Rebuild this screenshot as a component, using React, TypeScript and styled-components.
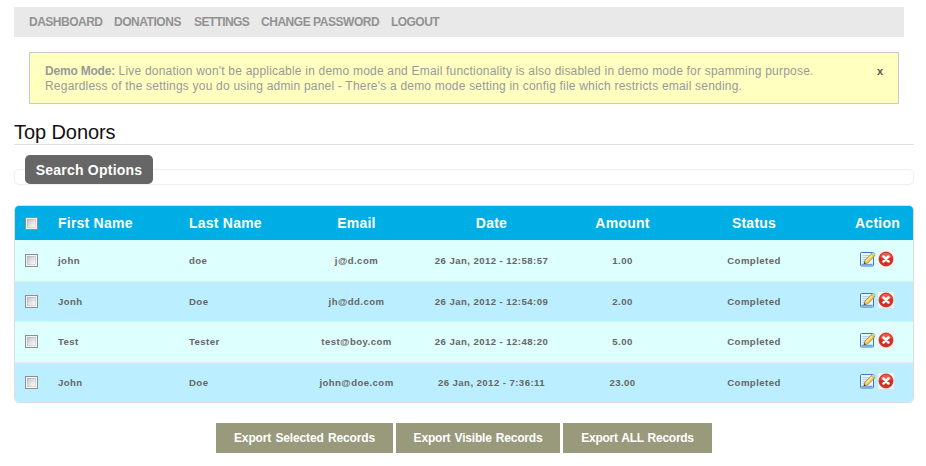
import React from "react";
import styled, { createGlobalStyle } from "styled-components";

const GlobalStyle = createGlobalStyle`
  * { box-sizing: border-box; }
  body {
    margin: 0;
    background: #fff;
    font-family: "Liberation Sans", Arial, sans-serif;
    font-size: 12px;
    color: #999;
  }
`;

const Page = styled.div`
  width: 926px;
  height: 466px;
  padding: 7px 12px 0 14px;
  overflow: hidden;
`;

const NavBar = styled.nav`
  display: flex;
  width: 890px;
  height: 30px;
  padding: 0 15px;
  background: #e9e9e9;
`;

const NavLink = styled.a<{ $width: number; $tracking: number }>`
  width: ${(p) => p.$width}px;
  line-height: 30px;
  font-weight: bold;
  letter-spacing: ${(p) => p.$tracking}px;
  white-space: nowrap;
  color: #929292;
`;

const Notice = styled.section`
  display: flex;
  justify-content: space-between;
  width: 870px;
  height: 52px;
  margin: 15px 0 0 15px;
  padding: 11px 15px 0;
  border: 1px solid #c9c9c9;
  background: #ffffbf;
`;

const NoticeLine = styled.p`
  margin: 0;
  line-height: 15px;
  letter-spacing: 0.205px;
  white-space: nowrap;
`;

const NoticeLabel = styled.b`
  letter-spacing: -0.2px;
`;

const NoticeClose = styled.button`
  height: 14px;
  padding: 0;
  border: 0;
  background: none;
  font: bold 11px/14px "Liberation Sans", Arial, sans-serif;
  color: #555;
`;

const Title = styled.h1`
  width: 900px;
  height: 28px;
  margin: 13px 0 0;
  padding-top: 4px;
  border-bottom: 1px solid #ddd;
  font-size: 20px;
  line-height: 23px;
  font-weight: normal;
  letter-spacing: -0.08px;
  color: #111;
`;

const SearchBox = styled.section`
  display: flex;
  width: 900px;
  height: 16px;
  margin-top: 24px;
  padding-left: 10px;
  border: 1px solid #eee;
  border-radius: 5px;
`;

const SearchLabel = styled.h2`
  width: 128px;
  height: 29px;
  margin: -15px 0 0;
  border-radius: 5px;
  background: #666;
  color: #fff;
  font-size: 14px;
  line-height: 30px;
  letter-spacing: 0.23px;
  text-align: center;
`;

const Table = styled.section`
  width: 900px;
  height: 198px;
  margin-top: 20px;
  border: 1px solid #ddd;
  border-radius: 5px;
  overflow: hidden;
`;

const Row = styled.div<{ $height: number; $line: number; $fill: string; $head?: boolean }>`
  display: grid;
  grid-template-columns: 43px 131px 98px 139px 131px 131px 132px 93px;
  height: ${(p) => p.$height}px;
  background: ${(p) => p.$fill};
  border-bottom: ${(p) => (p.$head ? 0 : "1px solid #e4ecec")};
  color: ${(p) => (p.$head ? "#fff" : "#666")};
  font-size: ${(p) => (p.$head ? 14 : 9.6)}px;
  line-height: ${(p) => p.$line}px;
  letter-spacing: ${(p) => (p.$head ? 0.23 : 0.43)}px;
  font-weight: bold;
  &:last-child { border-bottom: 0; }
`;

const Cell = styled.div<{ $center?: boolean }>`
  text-align: ${(p) => (p.$center ? "center" : "left")};
  white-space: nowrap;
`;

const CheckCell = styled.div<{ $top: number }>`
  padding: ${(p) => p.$top}px 0 0 10px;
`;

const Checkbox = styled.input`
  display: block;
  appearance: none;
  width: 13px;
  height: 13px;
  margin: 0;
  border: 1px solid #8e8f8f;
  background: linear-gradient(135deg, #c4c8d0, #f4f4f4 85%) center / 7px 7px no-repeat,
    linear-gradient(135deg, #b2b7c0, #e2e2e2) center / 9px 9px no-repeat, #f4f4f4;
`;

const ActionCell = styled.div<{ $top: number }>`
  display: flex;
  gap: 2px;
  padding: ${(p) => p.$top}px 0 0 40px;
`;

const ActionHead = styled(Cell)`
  padding-left: 22px;
`;

const Exports = styled.div`
  display: flex;
  gap: 3px;
  margin: 20px 0 0 202px;
`;

const ExportButton = styled.button<{ $width: number; $tracking: number }>`
  width: ${(p) => p.$width}px;
  height: 30px;
  padding: 0;
  border: 0;
  background: #99997b;
  color: #fff;
  font: bold 12px/30px "Liberation Sans", Arial, sans-serif;
  letter-spacing: ${(p) => p.$tracking}px;
  word-spacing: 1px;
  white-space: nowrap;
`;

const EditIcon = () => (
  <svg width="16" height="16" viewBox="0 0 16 16">
    <rect x=".5" y="1.5" width="13" height="13.5" rx="1" fill="#eaf4ff" stroke="#3a78c3" />
    <path d="M2.5 4.5h7M2.5 6.5h6M2.5 8.5h4M2.5 10.5h3" stroke="#b5d2f0" />
    <path d="M1.5 13.5h11" stroke="#6ba3df" strokeWidth="1.4" />
    <path d="M4 12.8l.8-3.5 7.3-7.2 2.8 2.6-7.3 7.3z" fill="#f5ca4b" stroke="#9b7135" strokeWidth=".7" />
    <path d="M5.9 10.1l7-6.9" stroke="#fff1a3" strokeWidth="1.2" />
    <path d="M11.3 2.9l1.3-1.2q1.2-.5 2.3 1l.2.8-1.4 1.4z" fill="#d9d3b8" stroke="#a08a58" strokeWidth=".5" />
    <path d="M3.8 13l.5-1.9 1.4 1.3z" fill="#333" />
  </svg>
);

const DeleteIcon = () => (
  <svg width="16" height="16" viewBox="0 0 16 16">
    <rect width="16" height="16" fill="#f5eeec" />
    <circle cx="8" cy="8" r="7" fill="#d62f22" stroke="#b82219" strokeWidth=".7" />
    <path d="M2.2 6.3a6 6 0 0 1 11.6 0Q8 9 2.2 6.3z" fill="#e65d4c" />
    <path d="M5.5 5.5l5 5M10.5 5.5l-5 5" stroke="#fff" strokeWidth="2.5" strokeLinecap="round" />
  </svg>
);

const links: [string, number, number][] = [
  ["DASHBOARD", 85, -0.5],
  ["DONATIONS", 80, -0.46],
  ["SETTINGS", 67, -0.62],
  ["CHANGE PASSWORD", 130, -0.46],
  ["LOGOUT", 60, -0.55],
];

const donors = [
  { first: "john", last: "doe", email: "j@d.com", date: "26 Jan, 2012 - 12:58:57", amount: "1.00", height: 42 },
  { first: "Jonh", last: "Doe", email: "jh@dd.com", date: "26 Jan, 2012 - 12:54:09", amount: "2.00", height: 40 },
  { first: "Test", last: "Tester", email: "test@boy.com", date: "26 Jan, 2012 - 12:48:20", amount: "5.00", height: 41 },
  { first: "John", last: "Doe", email: "john@doe.com", date: "26 Jan, 2012 - 7:36:11", amount: "23.00", height: 39 },
];

export default function App() {
  return (
    <Page>
      <GlobalStyle />
      <NavBar>
        {links.map(([label, width, tracking]) => (
          <NavLink key={label} $width={width} $tracking={tracking}>{label}</NavLink>
        ))}
      </NavBar>
      <Notice>
        <div>
          <NoticeLine>
            <NoticeLabel>Demo Mode:</NoticeLabel> Live donation won't be applicable in demo mode and Email functionality is also disabled in demo mode for spamming purpose.
          </NoticeLine>
          <NoticeLine>
            Regardless of the settings you do using admin panel - There's a demo mode setting in config file which restricts email sending.
          </NoticeLine>
        </div>
        <NoticeClose>x</NoticeClose>
      </Notice>
      <Title>Top Donors</Title>
      <SearchBox>
        <SearchLabel>Search Options</SearchLabel>
      </SearchBox>
      <Table>
        <Row $head $height={34} $line={35} $fill="#00aee6">
          <CheckCell $top={11}><Checkbox type="checkbox" /></CheckCell>
          <Cell>First Name</Cell>
          <Cell>Last Name</Cell>
          <Cell $center>Email</Cell>
          <Cell $center>Date</Cell>
          <Cell $center>Amount</Cell>
          <Cell $center>Status</Cell>
          <ActionHead $center>Action</ActionHead>
        </Row>
        {donors.map((d, i) => (
          <Row key={d.date} $height={d.height} $line={i ? 39 : 41} $fill={i % 2 ? "#bbefff" : "#ddfffd"}>
            <CheckCell $top={i ? 13 : 14}><Checkbox type="checkbox" /></CheckCell>
            <Cell>{d.first}</Cell>
            <Cell>{d.last}</Cell>
            <Cell $center>{d.email}</Cell>
            <Cell $center>{d.date}</Cell>
            <Cell $center>{d.amount}</Cell>
            <Cell $center>Completed</Cell>
            <ActionCell $top={i ? 10 : 11}><EditIcon /><DeleteIcon /></ActionCell>
          </Row>
        ))}
      </Table>
      <Exports>
        <ExportButton $width={177} $tracking={-0.13}>Export Selected Records</ExportButton>
        <ExportButton $width={164} $tracking={-0.2}>Export Visible Records</ExportButton>
        <ExportButton $width={149} $tracking={-0.27}>Export ALL Records</ExportButton>
      </Exports>
    </Page>
  );
}
